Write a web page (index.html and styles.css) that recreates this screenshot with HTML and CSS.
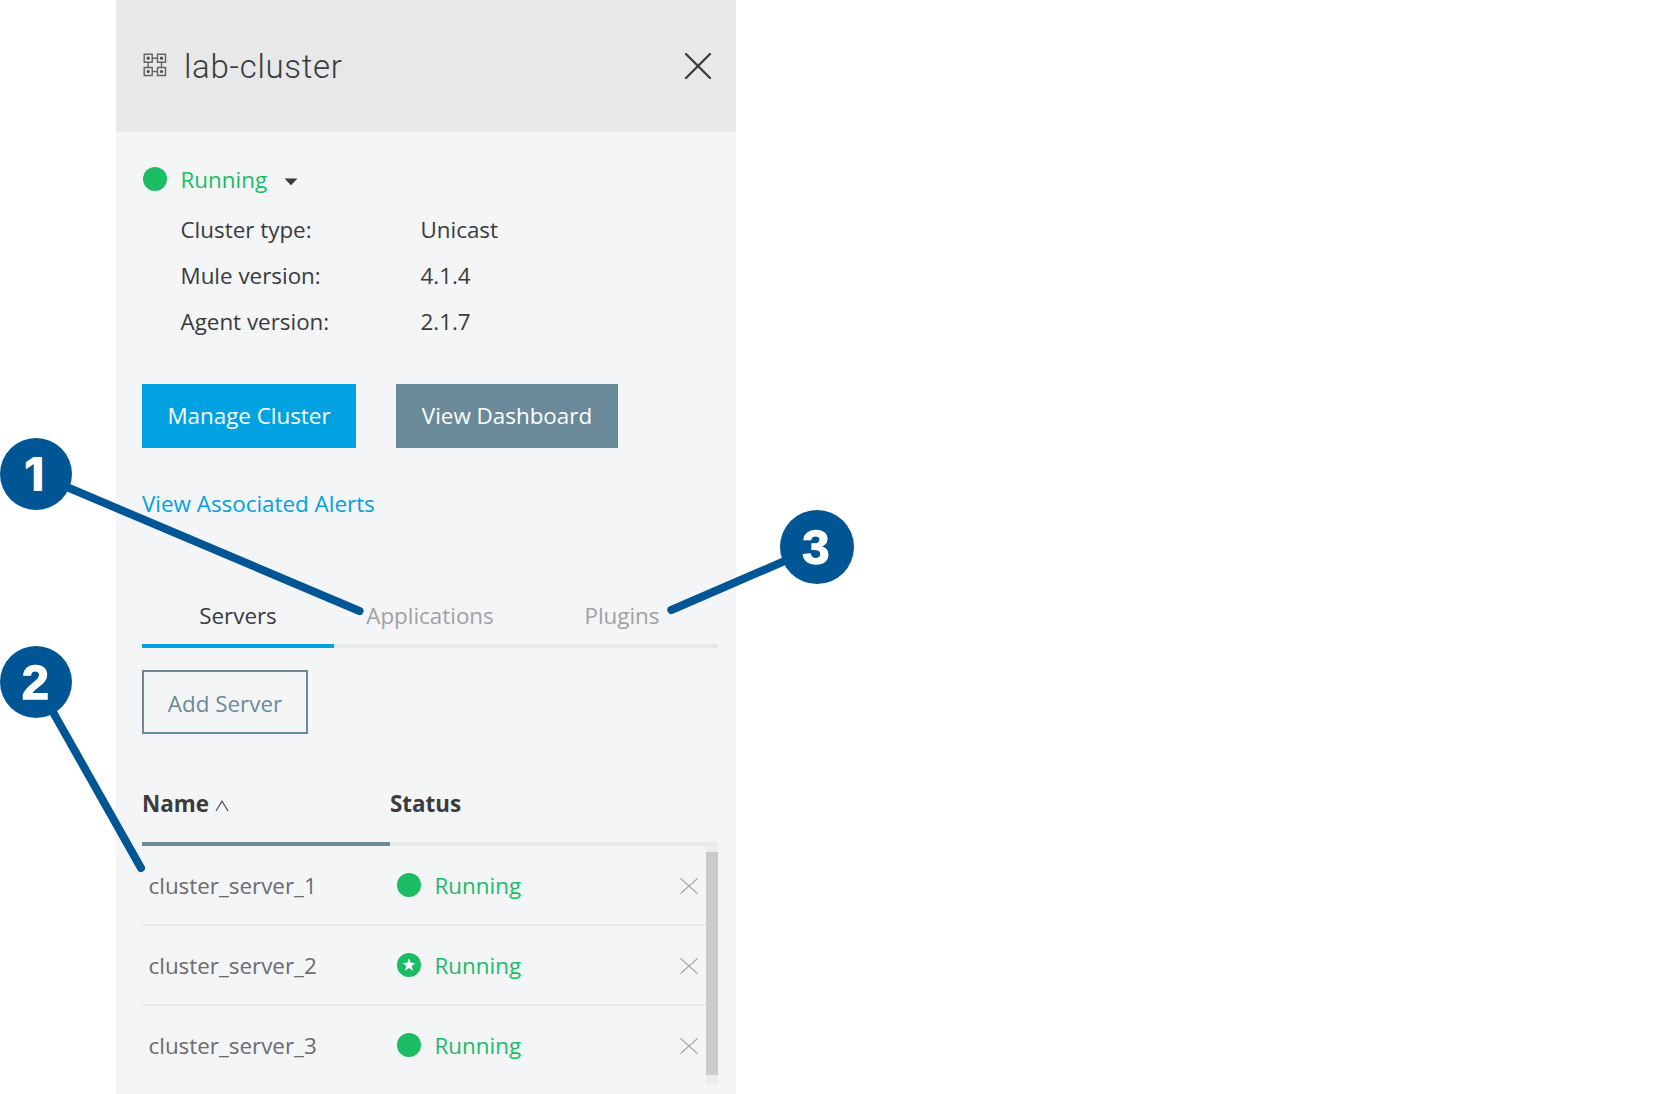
FILE: index.html
```html
<!DOCTYPE html>
<html lang="en">
<head>
<meta charset="utf-8">
<title>lab-cluster</title>
<link rel="stylesheet" href="styles.css">
</head>
<body>
<main class="panel">
  <header class="panel-header">
    <svg class="cluster-icon" width="24" height="24" viewBox="0 0 24 24" fill="none" stroke="#636466" stroke-width="1.4">
      <path d="M1.2 1.2h8v8h-8zM14.5 1.2h8v8h-8zM1.2 14.5h8v8h-8zM14.5 14.5h8v8h-8zM9.2 5.2h5.3M9.2 18.5h5.3M5.2 9.2v5.3M18.5 9.2v5.3"/>
      <g fill="#4a4b4d" stroke="none"><circle cx="5.2" cy="5.2" r="1.6"/><circle cx="18.5" cy="5.2" r="1.6"/><circle cx="5.2" cy="18.5" r="1.6"/><circle cx="18.5" cy="18.5" r="1.6"/></g>
    </svg>
    <h1 class="title">lab-cluster</h1>
    <svg class="close" width="28" height="28" viewBox="0 0 28 28" stroke="#3a3b3d" stroke-width="2.3" stroke-linecap="round"><path d="M2 2l24 24M26 2L2 26"/></svg>
  </header>
  <section class="body">
    <div class="status">
      <span class="dot"></span><span class="running">Running</span>
      <svg class="caret" width="14" height="8" viewBox="0 0 14 8"><path d="M.5.5h13L7 7.3z" fill="#3a3b3d"/></svg>
    </div>
    <dl class="details">
      <dt>Cluster type:</dt><dd>Unicast</dd>
      <dt>Mule version:</dt><dd>4.1.4</dd>
      <dt>Agent version:</dt><dd>2.1.7</dd>
    </dl>
    <div class="actions">
      <button class="btn primary">Manage Cluster</button>
      <button class="btn secondary">View Dashboard</button>
    </div>
    <a class="alerts">View Associated Alerts</a>
    <nav class="tabs">
      <span class="tab active">Servers</span><span class="tab">Applications</span><span class="tab">Plugins</span>
    </nav>
    <button class="btn outline">Add Server</button>
    <div class="table-head">
      <div class="th sorted">Name<svg class="sort" width="14" height="12" viewBox="0 0 14 12" fill="none" stroke="#58595b" stroke-width="1.3"><path d="M1 11L7 1.2 13 11"/></svg></div>
      <div class="th">Status</div>
    </div>
    <div class="rows">
      <div class="row"><span class="name">cluster_server_1</span><span class="dot"></span><span class="running">Running</span><svg class="remove" width="18" height="16" viewBox="0 0 18 16"><path d="M.3.3l17.4 15.4M17.7.3L.3 15.7"/></svg></div>
      <div class="row"><span class="name">cluster_server_2</span><span class="dot"><svg width="14" height="14" viewBox="0 0 14 14"><path fill="#fff" d="M7 .3l1.7 4.5 4.8.2-3.8 3 1.4 4.7L7 10l-4.1 2.7L4.3 8 .5 5l4.8-.2z"/></svg></span><span class="running">Running</span><svg class="remove" width="18" height="16" viewBox="0 0 18 16"><path d="M.3.3l17.4 15.4M17.7.3L.3 15.7"/></svg></div>
      <div class="row"><span class="name">cluster_server_3</span><span class="dot"></span><span class="running">Running</span><svg class="remove" width="18" height="16" viewBox="0 0 18 16"><path d="M.3.3l17.4 15.4M17.7.3L.3 15.7"/></svg></div>
      <div class="scrollbar"><div class="thumb"></div></div>
    </div>
  </section>
</main>
<svg class="callout-lines" width="1670" height="1094" viewBox="0 0 1670 1094" stroke="#005595" stroke-width="8" stroke-linecap="round">
  <path d="M36 474L359.5 611M36 682L141 868M817 547L671.3 610"/>
</svg>
<span class="callout one">1</span>
<span class="callout two">2</span>
<span class="callout three">3</span>
</body>
</html>
```
FILE: styles.css
```css
* { box-sizing: border-box; }
body {
  margin: 0;
  height: 1094px;
  position: relative;
  overflow: hidden;
  background: #fff;
  color: #3a3b3d;
  font: 22.4px/30px "Open Sans", sans-serif;
}
svg { display: block; flex: none; }
.panel { width: 620px; height: 1094px; margin-left: 116px; background: #f4f5f7; }
.panel-header { height: 132px; padding: 0 24px 0 27px; display: flex; align-items: center; background: #e7e8ea; }
.cluster-icon { margin-top: -2px; }
.title { flex: 1; margin: 0 0 0 17px; padding-top: 2px; font: 300 33px/40px Roboto, sans-serif; letter-spacing: 0.7px; }
.body { padding: 32px 18px 0 26px; }
.status { height: 30px; padding-left: 1px; display: flex; align-items: center; }
.dot { width: 24px; height: 24px; flex: none; border-radius: 50%; background: #1abc64; display: flex; align-items: center; justify-content: center; }
.running { margin-left: 13.5px; padding-top: 2px; color: #1abc64; }
.caret { margin: 5px 0 0 16.5px; }
.details { margin: 13px 0 0 38.5px; display: grid; grid-template-columns: 240px 1fr; line-height: 46px; }
.details dd { margin: 0; }
.actions { margin-top: 39px; display: flex; gap: 40px; }
.btn { height: 64px; padding: 0; border: 0; color: #fff; font: inherit; }
.primary { width: 214px; background: #00a2e1; }
.secondary { width: 222px; background: #6b8a99; }
.alerts { display: block; margin-top: 41px; color: #00a2df; }
.tabs { margin-top: 82px; height: 47px; display: flex; text-align: center; }
.tab { flex: 1; border-bottom: 4px solid #e7e8ea; color: #a0a2a4; }
.tab.active { border-color: #00a2e1; color: #3a3b3d; }
.outline { display: block; width: 166px; margin-top: 22px; padding: 3px 0 0; border: 2px solid #6b8a99; background: none; color: #6b8a99; }
.table-head { height: 57px; margin-top: 55px; display: flex; font-weight: 700; }
.th { flex: 1; display: flex; align-items: flex-start; border-bottom: 4px solid #e7e8ea; }
.th.sorted { flex: 0 0 248px; border-color: #6b8a99; }
.sort { margin: 11px 0 0 6px; }
.rows { position: relative; height: 238px; }
.row { height: 80px; padding: 0 20px 0 6.5px; display: flex; align-items: center; border-bottom: 2px solid #e7e8ea; }
.row:nth-child(3) { border-color: transparent; }
.name { width: 248.5px; padding-top: 2px; color: #6b6c6e; }
.remove { margin: 2px 0 0 auto; stroke: #a0a2a4; stroke-width: 1.2; }
.scrollbar { position: absolute; top: 0; right: 0; width: 12px; height: 238px; padding-top: 6px; background: #ebecef; }
.thumb { height: 223px; background: #cbcbcb; }
.callout-lines { position: absolute; left: 0; top: 0; }
.callout {
  position: absolute;
  width: 72px;
  height: 72px;
  border-radius: 50%;
  background: #005595;
  color: #fff;
  font: 700 49px/72px "Liberation Sans", sans-serif;
  text-align: center;
  -webkit-text-stroke: 1.3px #fff;
}
.one { left: 0; top: 438px; padding-right: 4px; font: 800 47px/72px Inter, sans-serif; -webkit-text-stroke: 0; }
.two { left: 0; top: 646px; padding-right: 1px; }
.three { left: 780px; top: 510px; width: 74px; height: 74px; line-height: 75px; padding-right: 2px; }
```
